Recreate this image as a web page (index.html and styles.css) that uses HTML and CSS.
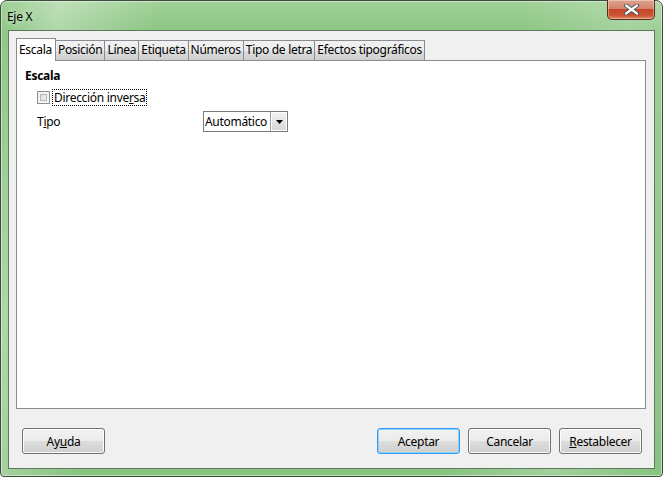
FILE: index.html
```html
<!DOCTYPE html>
<html lang="es">
<head>
<meta charset="utf-8">
<title>Eje X</title>
<link rel="stylesheet" href="styles.css">
</head>
<body>
<div class="window">
  <div class="titlebar">
    <span class="title">Eje X</span>
    <button class="close" aria-label="Cerrar">
      <svg width="15" height="11" viewBox="0 0 15 11"><path d="M2 1.5 L13 9.5 M13 1.5 L2 9.5" stroke="#3b4a5a" stroke-width="4" stroke-linecap="round"/><path d="M2 1.5 L13 9.5 M13 1.5 L2 9.5" stroke="#ffffff" stroke-width="2.2" stroke-linecap="round"/></svg>
    </button>
  </div>
  <div class="client">
    <div class="tabs">
      <div class="tab active">Escala</div>
      <div class="tab">Posición</div>
      <div class="tab">Línea</div>
      <div class="tab">Etiqueta</div>
      <div class="tab">Números</div>
      <div class="tab">Tipo de letra</div>
      <div class="tab">Efectos tipográficos</div>
    </div>
    <div class="panel">
      <div class="heading">Escala</div>
      <label class="check-row">
        <span class="checkbox"></span>
        <span class="focus">Dirección inve<u>r</u>sa</span>
      </label>
      <div class="field-row">
        <span class="field-label">T<u>i</u>po</span>
        <div class="combo">
          <span class="combo-text">Automático</span>
          <span class="combo-btn"><svg width="7" height="4" viewBox="0 0 7 4"><path d="M0 0 H7 L3.5 4 Z" fill="#000"/></svg></span>
        </div>
      </div>
    </div>
    <div class="buttons">
      <button class="btn">Ay<u>u</u>da</button>
      <div class="spacer"></div>
      <button class="btn default">Aceptar</button>
      <button class="btn">Cancelar</button>
      <button class="btn"><u>R</u>establecer</button>
    </div>
  </div>
</div>
</body>
</html>
```

FILE: styles.css
```css
* { box-sizing: border-box; }
html, body { margin: 0; padding: 0; }
body {
  width: 663px;
  height: 477px;
  overflow: hidden;
  background: #ffffff;
  font-family: "Noto Sans", "Open Sans", sans-serif;
  font-size: 12px;
  letter-spacing: -0.3px;
  color: #000;
}
.window {
  width: 663px;
  height: 477px;
  border: 1px solid #3d4d3d;
  border-radius: 7px 7px 4px 4px;
  background:
    linear-gradient(100deg, rgba(255,255,255,0) 0%, rgba(255,255,255,0.32) 8%, rgba(255,255,255,0) 22%, rgba(255,255,255,0) 70%, rgba(255,255,255,0.22) 85%, rgba(255,255,255,0) 100%),
    linear-gradient(180deg, #a0d197 0px, #8bc582 30px, #88c380 100%);
  box-shadow: inset 0 0 0 1px rgba(255,255,255,0.45);
  display: flex;
  flex-direction: column;
  padding: 0 7px 7px 7px;
}
.titlebar {
  height: 29px;
  display: flex;
  align-items: flex-start;
  position: relative;
}
.title {
  margin-top: 7px;
  margin-left: -1px;
  font-size: 12px;
  color: #000;
  text-shadow: 0 0 6px rgba(255,255,255,0.9);
}
.close {
  position: absolute;
  right: 0;
  top: -1px;
  width: 48px;
  height: 20px;
  border: 1px solid #5a2a20;
  border-top: none;
  border-radius: 0 0 5px 5px;
  background: linear-gradient(180deg, #e0a28c 0%, #d4856c 45%, #c4482a 50%, #c9532f 80%, #e08a62 100%);
  box-shadow: inset 0 0 0 1px rgba(255,255,255,0.35);
  padding: 0;
  display: flex;
  align-items: center;
  justify-content: center;
}
.client {
  flex: 1;
  background: #f0f0f0;
  border: 1px solid #5d7a5a;
  display: flex;
  flex-direction: column;
  padding: 7px 8px 0 7px;
}
.tabs {
  display: flex;
  align-items: flex-end;
  height: 22px;
  position: relative;
  z-index: 1;
}
.tab {
  height: 20px;
  padding: 0 2px 0 2px;
  line-height: 18px;
  border: 1px solid #898c95;
  border-bottom: none;
  margin-right: -1px;
  background: linear-gradient(180deg, #f2f2f2 0%, #ebebeb 50%, #dddddd 51%, #cfcfcf 100%);
  white-space: nowrap;
}
.tab.active {
  background: #ffffff;
  padding: 0 3px 0 2px;
  line-height: 21px;
  margin-bottom: -1px;
  height: 23px;
}
.panel {
  height: 349px;
  background: #ffffff;
  border: 1px solid #898c95;
  padding: 6px 8px;
}
.heading {
  font-weight: bold;
  line-height: 16px;
  margin-top: 1px;
}
.check-row {
  display: flex;
  align-items: center;
  margin-top: 5px;
  margin-left: 12px;
  height: 17px;
}
.checkbox {
  width: 13px;
  height: 13px;
  border: 1px solid #8e8f8f;
  background: linear-gradient(135deg, #d8d8d8 0%, #f4f4f4 100%);
  box-shadow: inset 0 0 0 2px #f4f4f4, inset 0 0 0 3px #b9b9b9;
  margin-right: 3px;
}
.focus {
  outline: 1px dotted #000;
  padding: 0 1px;
  line-height: 15px;
}
.field-row {
  display: flex;
  align-items: center;
  margin-top: 5px;
  margin-left: 12px;
  height: 21px;
}
.field-label {
  width: 166px;
}
.combo {
  display: flex;
  align-items: center;
  height: 21px;
  border: 1px solid #7a7a7a;
  background: #fff;
  padding-left: 1px;
}
.combo-text {
  padding-right: 3px;
}
.combo-btn {
  width: 17px;
  height: 19px;
  border-left: 1px solid #a0a0a0;
  background: linear-gradient(180deg, #f4f4f4 0%, #e4e4e4 50%, #d4d4d4 100%);
  display: flex;
  align-items: center;
  justify-content: center;
  box-shadow: inset 0 0 0 1px #fff;
}
.buttons {
  display: flex;
  align-items: center;
  margin-top: 19px;
  padding: 0 4px 0 6px;
}
.spacer { flex: 1; }
.btn {
  width: 83px;
  height: 26px;
  margin-left: 8px;
  font-family: inherit;
  font-size: 12px;
  letter-spacing: inherit;
  color: #000;
  border: 1px solid #707070;
  border-radius: 3px;
  background: linear-gradient(180deg, #f2f2f2 0%, #ebebeb 50%, #dddddd 51%, #cfcfcf 100%);
  box-shadow: inset 0 0 0 1px #fcfcfc;
  padding: 0;
}
.btn:first-child { margin-left: 0; }
.btn.default {
  border-color: #3399ff;
  box-shadow: inset 0 0 0 1px #8ad4f7;
}
```
